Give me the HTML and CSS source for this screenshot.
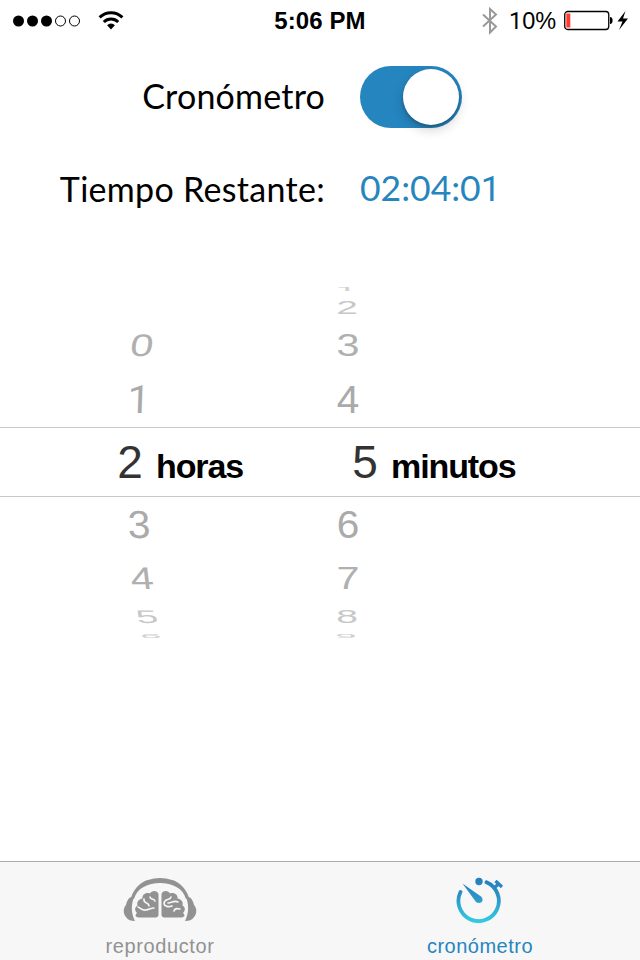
FILE: index.html
```html
<!DOCTYPE html>
<html lang="es">
<head>
<meta charset="utf-8">
<title>Cronómetro</title>
<link rel="stylesheet" href="styles.css">
</head>
<body>
<header class="status">
  <div class="status-left">
    <svg width="70" height="14" viewBox="0 0 70 14"><g fill="#000"><circle cx="6.5" cy="7" r="5.5"/><circle cx="20.5" cy="7" r="5.5"/><circle cx="34.5" cy="7" r="5.5"/></g><g fill="none" stroke="#000"><circle cx="48.5" cy="7" r="5"/><circle cx="62.5" cy="7" r="5"/></g></svg>
    <svg class="wifi" width="26" height="20" viewBox="0 0 26 20"><g fill="none" stroke="#000" stroke-width="3"><path d="M1.6 6.400a16.2 16.2 0 0 1 22.8 0"/><path d="M5.800 11a10.2 10.2 0 0 1 14.4 0"/></g><path d="M9.100 14.200a5.600 5.600 0 0 1 7.800 0L13 18.500z"/></svg>
  </div>
  <div class="clock">5:06 PM</div>
  <div class="status-right">
    <svg width="16" height="28" viewBox="0 0 16 28"><path d="M1 7.500l13 12L8 25.500V2l6 5.500L1 19.500" fill="none" stroke="#999" stroke-width="2"/></svg>
    <span class="percent"><span class="one">1</span>0%</span>
    <svg class="battery" width="66" height="22" viewBox="0 0 66 22"><rect x=".75" y="1.500" width="44" height="18" rx="3" fill="#fff" stroke="#000" stroke-width="1.300"/><path d="M2.300 3.500h4v14h-4z" fill="#ff3b30"/><path d="M46 7c3.500 0 3.500 7 0 7z"/><path d="M61.500 1L53.500 11.500h5L55 20 64 8.500h-5z"/></svg>
  </div>
</header>
<main>
  <section class="settings">
    <span class="label label-timer">Cronómetro</span>
    <div class="switch"><div class="knob"></div></div>
    <span class="label label-left">Tiempo Restante:</span>
    <span class="time">02:04:0<span class="one">1</span></span>
  </section>
  <section class="picker">
    <div class="wheel hours">
      <div class="row edge"></div>
      <div class="row far"></div>
      <div class="row mid up"><span class="digit">0</span></div>
      <div class="row near up"><span class="digit one">1</span></div>
      <div class="row selected"><span class="digit">2</span><span class="unit">horas</span></div>
      <div class="row near down"><span class="digit">3</span></div>
      <div class="row mid down"><span class="digit">4</span></div>
      <div class="row far down"><span class="digit">5</span></div>
      <div class="row edge down"><span class="digit">6</span></div>
    </div>
    <div class="wheel minutes">
      <div class="row edge up"><span class="digit one">1</span></div>
      <div class="row far up"><span class="digit">2</span></div>
      <div class="row mid up"><span class="digit">3</span></div>
      <div class="row near up"><span class="digit">4</span></div>
      <div class="row selected"><span class="digit">5</span><span class="unit">minutos</span></div>
      <div class="row near down"><span class="digit">6</span></div>
      <div class="row mid down"><span class="digit">7</span></div>
      <div class="row far down"><span class="digit">8</span></div>
      <div class="row edge down"><span class="digit">9</span></div>
    </div>
  </section>
</main>
<nav class="tabs">
  <div class="tab">
    <svg width="74" height="46" viewBox="0 0 74 46">
      <g fill="#929292">
        <path d="M8 21C11 10 20 4 25 3q12-4 24 0c5 1 14 7 17 18l-3 1C60 11 49 6 37 6S14 11 11 22z"/>
        <path d="M11 20C6 19 4 24 3 28c-3 3-3 9 0 12 2 3 5 4 9 4-4-8-4-16-1-24z"/>
        <path d="M63 20c5-1 7 4 8 8 3 3 3 9 0 12-2 3-5 4-9 4 4-8 4-16 1-24z"/>
        <path d="M35.500 17c-1-4-7-4-8.500-.5-4-1.500-8 1-7.500 5-4 .5-6 4-5 7-3 2-3 5-.5 7.500-3 3-1 4.500 3 4.500h15.500q3 0 3-3z"/>
        <path d="M38.500 17c1-4 7-4 8.500-.5 4-1.500 8 1 7.500 5 4 .5 6 4 5 7 3 2 3 5 .5 7.500 3 3 1 4.500-3 4.500H41.500q-3 0-3-3z"/>
      </g>
      <g fill="none" stroke="#f7f7f7" stroke-width="1.600" stroke-linecap="round">
        <path d="M15 30c3 1 4 4 8 3s5-2 8-2M21 22c-1 5 5 3 5 7m1-9c0 3 4 1 5 4"/>
        <path d="M48 20c-1 4-6 1-7 6 0 4 5 4 8 3m-4-3c4 0 6-3 10-1m-4 9c1-4 4-2 6-2"/>
      </g>
    </svg>
    <span class="tab-name">reproductor</span>
  </div>
  <div class="tab active">
    <svg width="50" height="46" viewBox="0 0 50 46">
      <defs><linearGradient id="blue" gradientUnits="userSpaceOnUse" x1="0" y1="2" x2="0" y2="45"><stop offset="0" stop-color="#247ebd"/><stop offset=".4" stop-color="#2c93c7"/><stop offset="1" stop-color="#34cbe0"/></linearGradient></defs>
      <g fill="none" stroke="url(#blue)" stroke-width="3.800"><path d="M5.500 15A20.200 20.200 0 1 0 31.500 5.300" stroke-linecap="round"/><path d="M38 12l6-5.500M40.500 4l6.500 6" stroke-width="3.200"/></g>
      <g fill="url(#blue)"><circle cx="24" cy="4.500" r="3.700"/><path d="M7.500 6.500L26 19.500c4 4-.5 8.500-5 5.500z"/></g>
    </svg>
    <span class="tab-name">cronómetro</span>
  </div>
</nav>
</body>
</html>
```
FILE: styles.css
```css
* { box-sizing: border-box; }
body {
  margin: 0;
  width: 640px;
  height: 960px;
  display: flex;
  flex-direction: column;
  background: #fff;
  color: #000;
  font-family: "Liberation Sans", Arial, sans-serif;
  overflow: hidden;
}
svg { display: block; flex: none; }
.status {
  height: 40px;
  display: grid;
  grid-template-columns: 200px 240px 200px;
  align-items: center;
}
.status-left, .status-right { display: flex; align-items: center; }
.status-left { padding-left: 12px; }
.wifi { margin-left: 16px; }
.clock {
  text-align: center;
  font: 700 24px/40px "Liberation Sans", Arial, sans-serif;
  letter-spacing: .1px;
  padding-top: 1px;
}
.status-right { padding-left: 42px; }
.percent { width: 54px; margin-left: 11px; font-size: 23.500px; line-height: 40px; padding-top: 1px; }
.battery { margin-left: 1px; }
.one { font-family: Roboto, sans-serif; }
main { flex: 1; }
.settings {
  height: 241px;
  padding-top: 26px;
  display: grid;
  grid-template-columns: 325px 1fr;
  grid-template-rows: 62px 92px;
  column-gap: 35px;
  align-items: center;
  font-family: Lato, sans-serif;
  font-size: 34px;
}
.label { justify-self: end; white-space: nowrap; }
.label-timer { letter-spacing: .2px; padding-bottom: 4px; }
.label-left { letter-spacing: .3px; padding-top: 28px; }
.time { color: #2785be; font-size: 35.500px; padding-top: 27px; letter-spacing: 0; }
.switch {
  width: 102px;
  height: 62px;
  border-radius: 31px;
  background: #2585bf;
  padding: 3px;
  display: flex;
  justify-content: flex-end;
}
.knob {
  width: 56px;
  height: 56px;
  border-radius: 50%;
  background: #fff;
  box-shadow: 0 5px 12px rgba(0,0,0,.18), 0 2px 3px rgba(0,0,0,.22);
}
.picker { display: grid; grid-template-columns: 320px 320px; }
.wheel { --near: 124px; --mid: 127px; --far: 132px; --edge: 136px; --sel: 115px; }
.minutes { --near: 13px; --mid: 13px; --far: 12px; --edge: 11px; --sel: 30px; }
.row { display: flex; align-items: center; }
.digit {
  width: 30px;
  flex: none;
  text-align: center;
  font-size: 39px;
  line-height: 40px;
  color: #aaa;
}
.near { height: 54px; padding-left: var(--near); }
.mid { height: 54px; padding-left: var(--mid); }
.far { height: 22px; padding-left: var(--far); }
.edge { height: 16px; padding-left: var(--edge); }
.near.down { padding-top: 2px; }
.mid.down { padding-top: 2px; }
.far.down { padding-top: 2px; }
.near .digit { transform: scale(1.04, 1); }
.mid .digit { transform: scale(1.06, .8); color: #b0b0b0; }
.far .digit { transform: scale(1, .47); color: #c8c8c8; }
.edge .digit { transform: scale(.98, .15); color: #d0d0d0; }
.edge.down { padding-top: 2px; }
.hours .near.up .digit { transform: scale(1.04, 1) skewX(-2deg); }
.hours .mid.up .digit { transform: scale(1.06, .8) skewX(-6deg); }
.hours .near.down .digit { transform: scale(1.04, 1) skewX(2deg); }
.hours .mid.down .digit { transform: scale(1.06, .8) skewX(5deg); }
.hours .far.down .digit { transform: scale(1, .47) skewX(7deg); }
.selected {
  height: 70px;
  border-top: 1px solid #c8c8c8;
  border-bottom: 1px solid #c8c8c8;
  padding-left: var(--sel);
  align-items: baseline;
  line-height: 68px;
}
.selected .digit { font-size: 46px; line-height: 68px; color: #333; }
.unit { margin-left: 11px; font-size: 34px; font-weight: 700; letter-spacing: -1.100px; }
.tabs {
  height: 99px;
  border-top: 1px solid #adadad;
  background: #f7f7f7;
  display: grid;
  grid-template-columns: 320px 320px;
}
.tab { display: flex; flex-direction: column; align-items: center; padding-top: 15px; color: #929292; }
.tab-name { font-size: 20px; line-height: 24px; margin-top: 11px; letter-spacing: .6px; }
.active .tab-name { letter-spacing: .5px; }
.active { color: #2785be; }
```
